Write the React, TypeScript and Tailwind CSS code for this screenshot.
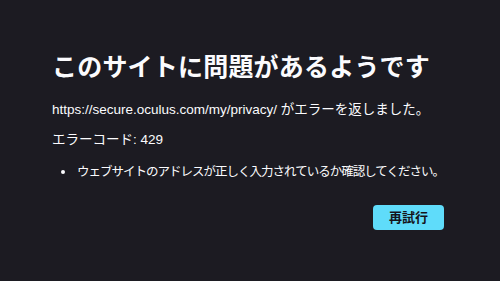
const font = "font-['Liberation_Sans','Noto_Sans_CJK_JP',sans-serif]";

export default function App() {
  return (
    <div className={`w-[500px] h-[281px] bg-[#1c1b22] text-[#fbfbfe] ${font} overflow-hidden`}>
      <div className="ml-[52px] w-[392px] pt-[52px]">
        <h1 className="text-[25px] leading-[30px] font-bold tracking-[0.2px]">
          このサイトに問題があるようです
        </h1>
        <p className="mt-[18px] text-[13.5px] leading-[20px]">
          https://secure.oculus.com/my/privacy/ がエラーを返しました。
        </p>
        <p className="mt-[10px] text-[13.5px] leading-[20px]">エラーコード: 429</p>
        <ul className="mt-[12px] list-disc pl-[24px] text-[12.5px] leading-[18px] whitespace-nowrap marker:text-[14px]">
          <li className="tracking-[-1px] pl-[1px]">ウェブサイトのアドレスが正しく入力されているか確認してください。</li>
        </ul>
        <div className="mt-[24px] flex justify-end">
          <button className="w-[71px] h-[25px] rounded-[4px] bg-[#5fdcfa] text-[#15141a] text-[13px] font-bold">
            再試行
          </button>
        </div>
      </div>
    </div>
  );
}
